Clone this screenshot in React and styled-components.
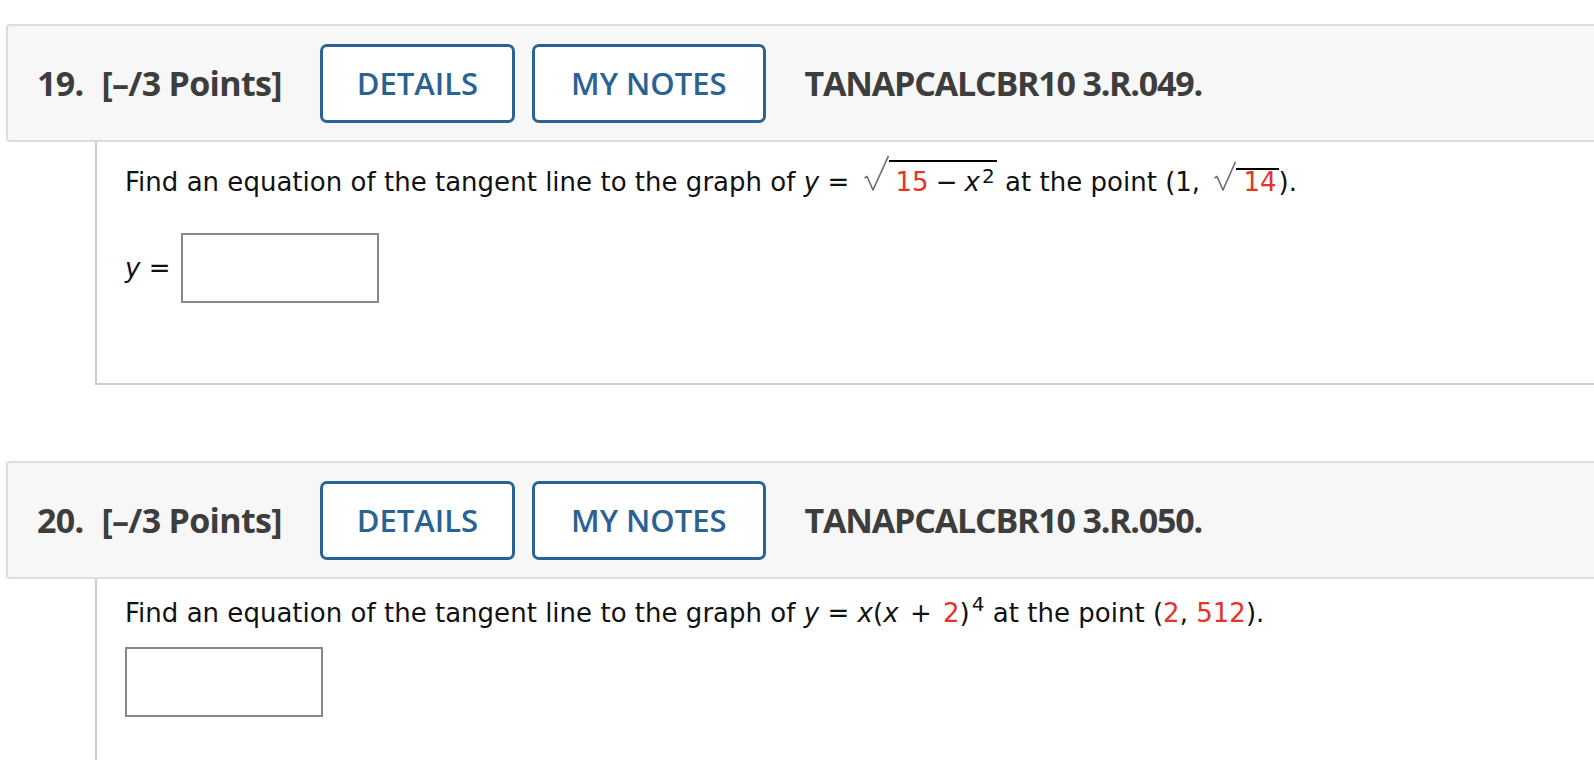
import React from 'react';
import styled, { createGlobalStyle } from 'styled-components';

const GlobalStyle = createGlobalStyle`
  html, body {
    margin: 0;
    padding: 0;
    background: #fff;
  }
  body {
    overflow: hidden;
  }
`;

const Page = styled.div`
  padding: 24px 0 0 6px;
  margin-right: -40px;
`;

const QuestionBlock = styled.section`
  margin-top: ${props => props.$first ? '0' : '76px'};
`;

const Header = styled.div`
  box-sizing: border-box;
  height: 118px;
  display: flex;
  align-items: center;
  padding-left: 29px;
  background: #f7f7f7;
  border: 2px solid #ddd;
  border-radius: 4px;
  font-family: "Open Sans", sans-serif;
  font-weight: 700;
  font-size: 34px;
  letter-spacing: -0.7px;
  color: #3d3d3d;
`;

const Number = styled.span`
  margin-right: 18px;
`;

const Points = styled.span`
  margin-right: 38px;
`;

const HeaderButton = styled.button`
  box-sizing: border-box;
  height: 79px;
  padding: 0 ${props => props.$pad}px;
  margin-right: ${props => props.$last ? '39px' : '17px'};
  background: #fff;
  border: 3px solid #2b6294;
  border-radius: 7px;
  font-family: "Open Sans", sans-serif;
  font-weight: 600;
  font-size: 31px;
  color: #2b6294;
  cursor: pointer;
`;

const Code = styled.span`
  letter-spacing: -1.2px;
`;

const Body = styled.div`
  margin-left: 89px;
  padding: ${props => props.$top}px 0 80px 28px;
  border-left: 2px solid #ccc;
  border-bottom: 2px solid #ccc;
  font-family: "DejaVu Sans", Verdana, sans-serif;
  font-size: 26px;
  letter-spacing: 0.02px;
  color: #111;
`;

const Prompt = styled.p`
  margin: 0;
  line-height: 36px;
`;

const AnswerRow = styled.div`
  display: flex;
  align-items: center;
  gap: 10px;
  margin-top: ${props => props.$gap}px;
`;

const Var = styled.i`
  font-style: italic;
`;

const Red = styled.span`
  color: #e6342b;
`;

const Op = styled.span`
  margin: 0 ${props => props.$space}px;
`;

const Sup = styled.sup`
  font-size: 20px;
  line-height: 0;
  vertical-align: ${props => props.$raise}px;
  margin-left: ${props => props.$gap || 1}px;
`;

const AnswerBox = styled.input`
  box-sizing: border-box;
  width: 198px;
  height: 70px;
  margin: 0;
  border: 2px solid #888;
  background: #fff;
  font: inherit;
`;

const SqrtRoot = styled.span`
  display: inline-flex;
  align-items: baseline;
  margin-left: 6px;
`;

const Radical = styled.svg`
  width: ${props => props.$w}px;
  height: ${props => props.$h}px;
  margin-bottom: -5px;
  flex: none;
`;

const Radicand = styled.span`
  display: inline-block;
  line-height: 24px;
  white-space: nowrap;
  padding: ${props => props.$pad}px 2px 0 7px;
  border-top: 2px solid #000;
`;

function Sqrt({ children, h = 36, w = 25, pad = 8 }) {
  return (
    <SqrtRoot>
      <Radical $w={w} $h={h} viewBox={`0 0 ${w} ${h}`}>
        <path
          d={`M0.5 ${h - 13} L3 ${h - 14.5} L9 ${h - 1} L${w - 0.5} 0.8`}
          fill="none"
          stroke="#707070"
          strokeWidth="1.7"
          strokeLinejoin="round"
        />
      </Radical>
      <Radicand $pad={pad}>{children}</Radicand>
    </SqrtRoot>
  );
}

function Question({ number, code, first, children }) {
  return (
    <QuestionBlock $first={first}>
      <Header>
        <Number>{number}.</Number>
        <Points>[–/3 Points]</Points>
        <HeaderButton type="button" $pad={34}>DETAILS</HeaderButton>
        <HeaderButton type="button" $pad={36} $last>MY NOTES</HeaderButton>
        <Code>{code}</Code>
      </Header>
      {children}
    </QuestionBlock>
  );
}

export default function App() {
  return (
    <Page>
      <GlobalStyle />
      <Question number={19} code="TANAPCALCBR10 3.R.049." first>
        <Body $top={13}>
          <Prompt>
            Find an equation of the tangent line to the graph of <Var>y</Var> ={' '}
            <Sqrt>
              <Red>15</Red><Op $space={7}>−</Op><Var>x</Var><Sup $raise={8} $gap={2}>2</Sup>
            </Sqrt>{' '}
            at the point (1,{' '}
            <Sqrt h={30} w={22} pad={0}>
              <Red>14</Red>
            </Sqrt>
            ).
          </Prompt>
          <AnswerRow $gap={33}>
            <span><Var>y</Var> =</span>
            <AnswerBox type="text" aria-label="answer 19" />
          </AnswerRow>
        </Body>
      </Question>
      <Question number={20} code="TANAPCALCBR10 3.R.050.">
        <Body $top={16}>
          <Prompt>
            Find an equation of the tangent line to the graph of <Var>y</Var> ={' '}
            <Var>x</Var>(<Var>x</Var> <Op $space={3}>+</Op> <Red>2</Red>)<Sup $raise={11} $gap={2}>4</Sup> at the point (<Red>2</Red>,{' '}
            <Red>512</Red>).
          </Prompt>
          <AnswerRow $gap={16}>
            <AnswerBox type="text" aria-label="answer 20" />
          </AnswerRow>
        </Body>
      </Question>
    </Page>
  );
}
